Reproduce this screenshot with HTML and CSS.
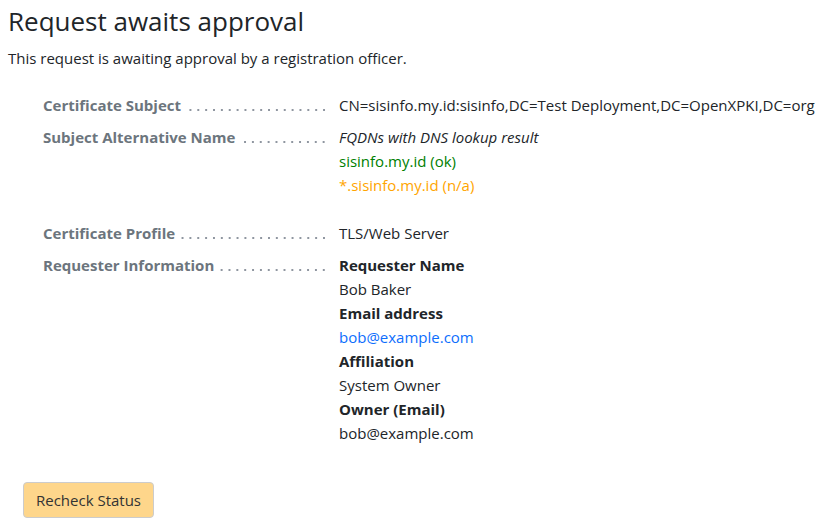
FILE: index.html
```html
<!DOCTYPE html>
<html lang="en">
<head>
<meta charset="utf-8">
<title>Request awaits approval</title>
<link rel="stylesheet" href="styles.css">
</head>
<body>
<main class="page">
  <h1 class="title">Request awaits approval</h1>
  <p class="intro">This request is awaiting approval by a registration officer.</p>

  <dl class="details">
    <div class="row">
      <dt class="label"><span class="label-text">Certificate Subject</span><span class="leader"></span></dt>
      <dd class="value">CN=sisinfo.my.id:sisinfo,DC=Test Deployment,DC=OpenXPKI,DC=org</dd>
    </div>
    <div class="row">
      <dt class="label"><span class="label-text">Subject Alternative Name</span><span class="leader"></span></dt>
      <dd class="value">
        <div class="note">FQDNs with DNS lookup result</div>
        <div class="ok">sisinfo.my.id (ok)</div>
        <div class="na">*.sisinfo.my.id (n/a)</div>
        <div class="blank"></div>
      </dd>
    </div>
    <div class="row">
      <dt class="label"><span class="label-text">Certificate Profile</span><span class="leader"></span></dt>
      <dd class="value">TLS/Web Server</dd>
    </div>
    <div class="row">
      <dt class="label"><span class="label-text">Requester Information</span><span class="leader"></span></dt>
      <dd class="value">
        <div class="sub-label">Requester Name</div>
        <div>Bob Baker</div>
        <div class="sub-label">Email address</div>
        <div><a class="link" href="#">bob@example.com</a></div>
        <div class="sub-label">Affiliation</div>
        <div>System Owner</div>
        <div class="sub-label">Owner (Email)</div>
        <div>bob@example.com</div>
      </dd>
    </div>
  </dl>

  <div class="actions">
    <button class="btn" type="button">Recheck Status</button>
  </div>
</main>
</body>
</html>
```

FILE: styles.css
```css
* { box-sizing: border-box; }

html, body {
  margin: 0;
  padding: 0;
  background: #fff;
}

body {
  font-family: "Open Sans", "Noto Sans", "Liberation Sans", sans-serif;
  font-size: 15px;
  line-height: 24px;
  color: #212529;
}

.page {
  padding: 2px 8px 0 8px;
}

.title {
  margin: 0;
  font-size: 26px;
  line-height: 38px;
  font-weight: 400;
  color: #212529;
}

.intro {
  margin: 6px 0 0 0;
}

.details {
  margin: 23px 0 0 35px;
  display: flex;
  flex-direction: column;
  gap: 8px;
}

.row {
  display: grid;
  grid-template-columns: 296px 1fr;
}

.label {
  display: flex;
  align-items: baseline;
  font-weight: 700;
  color: #6c757d;
  padding-right: 11px;
  margin: 0;
}

.label-text {
  white-space: nowrap;
  padding-right: 5px;
}

.leader {
  flex: 1;
  height: 2px;
  background-image: radial-gradient(circle, #8f96a0 0.9px, transparent 1.2px);
  background-size: 7.87px 2px;
  background-position: right 0;
  background-repeat: repeat-x;
}

.value {
  margin: 0;
}

.note { font-style: italic; }
.ok { color: #008000; }
.na { color: #ffa500; }
.blank { height: 16px; }

.sub-label { font-weight: 700; }

.link {
  color: #0d6efd;
  text-decoration: none;
}

.actions {
  margin-top: 37px;
  padding-left: 15px;
}

.btn {
  font-family: inherit;
  font-size: 15px;
  line-height: 22px;
  color: #333;
  background: #fed68b;
  border: 1px solid #ccc;
  border-radius: 4px;
  padding: 0;
  white-space: nowrap;
  width: 131px;
  height: 36px;
}
```
